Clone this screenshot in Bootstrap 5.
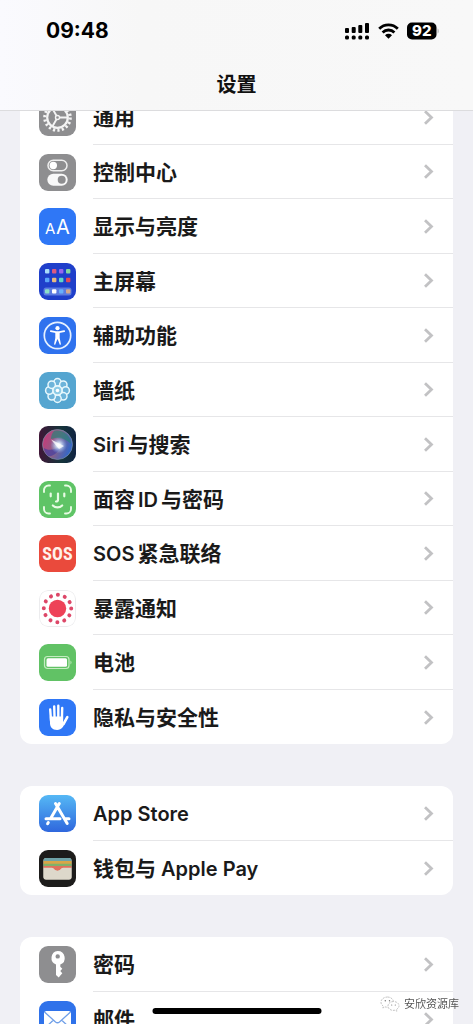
<!DOCTYPE html>
<html lang="zh-CN">
<head>
<meta charset="utf-8">
<meta name="viewport" content="width=device-width, initial-scale=1">
<title>设置</title>
<link href="https://cdn.jsdelivr.net/npm/bootstrap@5.3.0/dist/css/bootstrap.min.css" rel="stylesheet">
<style>
  body {
    font-family: Inter, "Noto Sans CJK SC", sans-serif;
    background: #f0f0f5;
    color: #111;
  }
  .top-bar {
    height: 111px;
    background: linear-gradient(90deg, #fafafe, #f7f7f7 30%, #f8f8f8);
    border-bottom: 1px solid #dcdcde;
  }
  .status-row { padding: 18px 34px 0 46px; }
  .clock { font-size: 21px; line-height: 26px; font-weight: 700; color: #000; }
  .page-title { font-size: 20px; line-height: 28px; font-weight: 600; margin-top: 27px; }
  .settings { margin-top: -21px; padding: 0 20px; }
  .group { margin-bottom: 42px; border-radius: 12px; overflow: hidden; background: #fff; }
  .setting {
    height: 54px;
    padding-left: 19px;
    color: #1a1a1a;
    font-size: 21px;
    line-height: 28px;
    font-weight: 600;
    text-decoration: none;
  }
  .setting:nth-child(odd) { height: 55px; }
  .app-icon { width: 37px; height: 37px; border-radius: 9px; flex: none; margin-right: 17px; }
  .label-row { border-bottom: 1px solid #e6e6e8; padding-right: 19px; }
  .label-row > span { padding-top: 2px; }
  .setting:last-child .label-row { border-bottom: 0; }
  .latin { font-size: 20px; }
  .latin-first { margin-right: 3px; }
  .latin-mid { margin: 0 3px; }
  .chev { width: 11px; height: 17px; flex: none; }
  .home-bar { bottom: 10px; width: 169px; height: 6px; border-radius: 3px; background: #000; }
  .credit { right: 14px; bottom: 12px; font-size: 11px; line-height: 16px; color: #555; text-shadow: 0 0 1px #fff; }
</style>
</head>
<body class="vh-100 overflow-hidden d-flex flex-column">
<svg class="d-none" aria-hidden="true">
  <symbol id="chev" viewBox="0 0 11 17"><path d="M2 2.200 8.500 8.500 2 14.800" fill="none" stroke="#c2c2c4" stroke-width="2.800"/></symbol>
</svg>

<header class="top-bar flex-shrink-0 position-relative z-1">
  <div class="status-row d-flex justify-content-between align-items-center">
    <span class="clock">09:48</span>
    <span class="d-flex align-items-center">
      <svg width="25" height="18" viewBox="0 0 25 18" aria-label="信号"><g><rect x="0" y="6" width="4" height="5" rx="1"/><rect x="6.700" y="5" width="4" height="6" rx="1"/><rect x="13.300" y="3" width="4" height="8" rx="1"/><rect x="20" y="1" width="4" height="10" rx="1"/><rect x="0" y="13.500" width="4" height="4" rx="1.500"/><rect x="6.700" y="13.500" width="4" height="4" rx="1.500"/><rect x="13.300" y="13.500" width="4" height="4" rx="1.500"/><rect x="20" y="13.500" width="4" height="4" rx="1.500"/></g></svg>
      <svg class="ms-2" width="21" height="16" viewBox="0 0 21 16" aria-label="无线网络"><g fill="none" stroke="#000" stroke-width="2.800"><path d="M1.200 5.700a13.200 13.200 0 0 1 18.600 0"/><path d="M4.600 9.400a8.400 8.400 0 0 1 11.800 0"/></g><path d="M10.500 15.800 7 12.300a5 5 0 0 1 7 0z"/></svg>
      <svg class="ms-2" width="32" height="18" viewBox="0 0 32 18" aria-label="电量 92"><rect x="0" y="0.500" width="29.500" height="17" rx="5"/><path d="M30.500 6.500c1.800.6 1.800 4.400 0 5z" fill="#bbb"/><text x="14.800" y="14.200" text-anchor="middle" font-size="15" font-weight="800" fill="#fff">92</text></svg>
    </span>
  </div>
  <h1 class="page-title text-center mb-0">设置</h1>
</header>

<main class="settings">
  <nav class="group" aria-label="通用设置">
    <a class="setting d-flex align-items-center" href="#general">
      <svg class="app-icon" viewBox="0 0 37 37"><rect width="37" height="37" fill="#8e8e90"/><g fill="none" stroke="#f4f4f4"><circle cx="18.500" cy="18.500" r="12.700" stroke-width="3.200" stroke-dasharray="2.200 2.233"/><circle cx="18.500" cy="18.500" r="10.300" stroke-width="2.200"/><circle cx="18.500" cy="18.500" r="2" stroke-width="1.400"/><path d="M20.500 18.500h8M17.500 16.800l-4-7M17.500 20.200l-4 7" stroke-width="1.900"/></g></svg>
      <span class="label-row d-flex flex-grow-1 h-100 align-items-center justify-content-between"><span>通用</span><svg class="chev"><use href="#chev"/></svg></span></a>
    <a class="setting d-flex align-items-center" href="#control">
      <svg class="app-icon" viewBox="0 0 37 37"><rect width="37" height="37" fill="#8e8e90"/><rect x="9" y="6.200" width="19" height="10.600" rx="5.300" fill="none" stroke="#eee" stroke-width="1.500"/><circle cx="14.300" cy="11.500" r="3.700" fill="#fff"/><rect x="8.300" y="19.800" width="20.400" height="12" rx="6" fill="#f8f8f8"/><circle cx="22.700" cy="25.800" r="4" fill="#8e8e90"/></svg>
      <span class="label-row d-flex flex-grow-1 h-100 align-items-center justify-content-between"><span>控制中心</span><svg class="chev"><use href="#chev"/></svg></span></a>
    <a class="setting d-flex align-items-center" href="#display">
      <svg class="app-icon" viewBox="0 0 37 37"><rect width="37" height="37" fill="#2f77f6"/><g font-weight="400" fill="#fff"><text x="6" y="26" font-size="15">A</text><text x="17" y="26" font-size="20">A</text></g></svg>
      <span class="label-row d-flex flex-grow-1 h-100 align-items-center justify-content-between"><span>显示与亮度</span><svg class="chev"><use href="#chev"/></svg></span></a>
    <a class="setting d-flex align-items-center" href="#home">
      <svg class="app-icon" viewBox="0 0 37 37"><rect width="37" height="37" fill="#1f3fca"/><rect x="4.500" y="24.500" width="28" height="8" rx="2.500" fill="#5b7be0"/><g><rect x="6" y="6" width="4.400" height="4.400" rx="1" fill="#a9dcf8"/><rect x="13" y="6" width="4.400" height="4.400" rx="1" fill="#dc5a80"/><rect x="20" y="6" width="4.400" height="4.400" rx="1" fill="#9966ec"/><rect x="27" y="6" width="4.400" height="4.400" rx="1" fill="#84d6a0"/><rect x="6" y="14.800" width="4.400" height="4.400" rx="1" fill="#5aa4f8"/><rect x="13" y="14.800" width="4.400" height="4.400" rx="1" fill="#e8ba80"/><rect x="20" y="14.800" width="4.400" height="4.400" rx="1" fill="#62d6c4"/><rect x="27" y="14.800" width="4.400" height="4.400" rx="1" fill="#e24858"/><rect x="6" y="26.200" width="4.400" height="4.400" rx="1" fill="#8ce0c8"/><rect x="13" y="26.200" width="4.400" height="4.400" rx="1" fill="#fff"/><rect x="20" y="26.200" width="4.400" height="4.400" rx="1" fill="#69b0fa"/><rect x="27" y="26.200" width="4.400" height="4.400" rx="1" fill="#d4a88c"/></g></svg>
      <span class="label-row d-flex flex-grow-1 h-100 align-items-center justify-content-between"><span>主屏幕</span><svg class="chev"><use href="#chev"/></svg></span></a>
    <a class="setting d-flex align-items-center" href="#access">
      <svg class="app-icon" viewBox="0 0 37 37"><rect width="37" height="37" fill="#2f72ee"/><circle cx="18.500" cy="18.500" r="13.200" fill="none" stroke="#e4f0ff" stroke-width="1.700"/><circle cx="18.500" cy="11.200" r="2.100" fill="#fff"/><path d="M11.800 14.200l5 1h3.400l5-1M18.500 15.500v6" stroke="#fff" stroke-width="1.700" stroke-linecap="round" fill="none"/><path d="M16.300 15h4.400v6l1.300 6.500-1.200.3-2.300-6-2.300 6-1.200-.3 1.300-6.500z" fill="#fff"/></svg>
      <span class="label-row d-flex flex-grow-1 h-100 align-items-center justify-content-between"><span>辅助功能</span><svg class="chev"><use href="#chev"/></svg></span></a>
    <a class="setting d-flex align-items-center" href="#wallpaper">
      <svg class="app-icon" viewBox="0 0 37 37"><rect width="37" height="37" fill="#55a5d0"/><g fill="#6db4da" stroke="#e6f7fc" stroke-width="1.500"><circle cx="18.500" cy="10.300" r="3.700"/><circle cx="24.300" cy="12.700" r="3.700"/><circle cx="26.700" cy="18.500" r="3.700"/><circle cx="24.300" cy="24.300" r="3.700"/><circle cx="18.500" cy="26.700" r="3.700"/><circle cx="12.700" cy="24.300" r="3.700"/><circle cx="10.300" cy="18.500" r="3.700"/><circle cx="12.700" cy="12.700" r="3.700"/><circle cx="18.500" cy="18.500" r="4.500" fill="#8ccbe6"/></g><circle cx="18.500" cy="18.500" r="1.800" fill="#fff"/></svg>
      <span class="label-row d-flex flex-grow-1 h-100 align-items-center justify-content-between"><span>墙纸</span><svg class="chev"><use href="#chev"/></svg></span></a>
    <a class="setting d-flex align-items-center" href="#siri">
      <svg class="app-icon" viewBox="0 0 37 37"><defs><linearGradient id="orb" x1="0" y1="0.300" x2="1" y2="0.700"><stop offset="0" stop-color="#c83a78"/><stop offset=".45" stop-color="#8b6088"/><stop offset="1" stop-color="#2668d0"/></linearGradient><radialGradient id="glow" cx=".54" cy=".52" r=".28"><stop offset="0" stop-color="#fff"/><stop offset=".25" stop-color="#e4f4ff" stop-opacity=".9"/><stop offset="1" stop-color="#80b8ff" stop-opacity="0"/></radialGradient><linearGradient id="night" x1="0" x2="1"><stop offset="0" stop-color="#401637"/><stop offset=".6" stop-color="#15343a"/><stop offset="1" stop-color="#102443"/></linearGradient></defs><rect width="37" height="37" fill="url(#night)"/><circle cx="18.500" cy="18.500" r="15" fill="url(#orb)" stroke="#7790a8" stroke-opacity=".7"/><path d="M15 5c8-2 17 4 17 13-6-6-13-7-20-5 0-3 1-6 3-8z" fill="#258276" opacity=".65"/><path d="M5 22c4 3 11 2 17-2-2 6-8 11-13 10-2-2-4-5-4-8z" fill="#443fa0" opacity=".7"/><circle cx="18.500" cy="18.500" r="15" fill="url(#glow)"/><path d="M12 13.500 25 20l-5 3z" fill="#fff" opacity=".75"/></svg>
      <span class="label-row d-flex flex-grow-1 h-100 align-items-center justify-content-between"><span><span class="latin latin-first">Siri</span>与搜索</span><svg class="chev"><use href="#chev"/></svg></span></a>
    <a class="setting d-flex align-items-center" href="#faceid">
      <svg class="app-icon" viewBox="0 0 37 37"><rect width="37" height="37" fill="#5fc466"/><g fill="none" stroke="#e8fbe4" stroke-width="1.900" stroke-linecap="round"><path d="M5 11V9a4.500 4.500 0 0 1 4.500-4.500H11M26 4.500h1.500A4.500 4.500 0 0 1 32 9v2M32 26v2a4.500 4.500 0 0 1-4.500 4.500H26M11 32.500H9.500A4.500 4.500 0 0 1 5 28v-2"/><path d="M11.700 12.500v2.800M25.300 12.500v2.800M19 12.500v6.300q0 1.700-2 1.700M13.800 24.500c2.600 2.600 6.800 2.600 9.400 0" stroke-width="2.200"/></g></svg>
      <span class="label-row d-flex flex-grow-1 h-100 align-items-center justify-content-between"><span>面容<span class="latin latin-mid">ID</span>与密码</span><svg class="chev"><use href="#chev"/></svg></span></a>
    <a class="setting d-flex align-items-center" href="#sos">
      <svg class="app-icon" viewBox="0 0 37 37"><rect width="37" height="37" fill="#ea4a3c"/><text x="18.500" y="24.500" text-anchor="middle" font-family="'Liberation Sans Narrow','Roboto Condensed','Open Sans Condensed',Roboto,sans-serif" font-size="18" font-weight="700" fill="#fff0ea">SOS</text></svg>
      <span class="label-row d-flex flex-grow-1 h-100 align-items-center justify-content-between"><span><span class="latin latin-first">SOS</span>紧急联络</span><svg class="chev"><use href="#chev"/></svg></span></a>
    <a class="setting d-flex align-items-center" href="#exposure">
      <svg class="app-icon" viewBox="0 0 37 37"><rect x=".5" y=".5" width="36" height="36" rx="8.500" fill="#fff" stroke="#ececee"/><circle cx="18.500" cy="18.500" r="8.700" fill="#ee4258"/><circle cx="18.500" cy="18.500" r="13.700" fill="none" stroke="#dd4768" stroke-width="4" stroke-linecap="round" stroke-dasharray="0.010 7.163"/></svg>
      <span class="label-row d-flex flex-grow-1 h-100 align-items-center justify-content-between"><span>暴露通知</span><svg class="chev"><use href="#chev"/></svg></span></a>
    <a class="setting d-flex align-items-center" href="#battery">
      <svg class="app-icon" viewBox="0 0 37 37"><rect width="37" height="37" fill="#61c265"/><rect x="5.500" y="12.500" width="24.500" height="12" rx="3" fill="none" stroke="#c4ecc0" stroke-width="1.200"/><rect x="7.500" y="14.300" width="20.500" height="8.400" rx="1.500" fill="#fff"/><path d="M31.500 16.500q2 2 0 4z" fill="#c4ecc0"/></svg>
      <span class="label-row d-flex flex-grow-1 h-100 align-items-center justify-content-between"><span>电池</span><svg class="chev"><use href="#chev"/></svg></span></a>
    <a class="setting d-flex align-items-center" href="#privacy">
      <svg class="app-icon" viewBox="0 0 37 37"><rect width="37" height="37" fill="#2f77f6"/><g stroke="#fff" stroke-linecap="round" fill="none"><path d="M11.200 10.500l.8 11M15.200 7.500l.4 13M19.300 6.800v13M23.200 9l-.3 12" stroke-width="2.400"/><path d="M28.300 18.200 24.500 25" stroke-width="2.600"/></g><path d="M10.800 17.500h13.300v6l2-1c-1 4.500-3.300 8.500-8 8.500-5 0-6.900-3-7.100-6.500z" fill="#fff"/></svg>
      <span class="label-row d-flex flex-grow-1 h-100 align-items-center justify-content-between"><span>隐私与安全性</span><svg class="chev"><use href="#chev"/></svg></span></a>
  </nav>

  <nav class="group" aria-label="商店与钱包">
    <a class="setting d-flex align-items-center" href="#store">
      <svg class="app-icon" viewBox="0 0 37 37"><defs><linearGradient id="sky" x1="0" y1="0" x2="0" y2="1"><stop offset="0" stop-color="#55b8f5"/><stop offset="1" stop-color="#2f67dd"/></linearGradient></defs><rect width="37" height="37" fill="url(#sky)"/><g stroke="#fff" stroke-width="3" stroke-linecap="round" fill="none"><path d="M20.300 8.500 11.500 23.800M16.500 8.500l11.700 20M7 23.800h14M26 23.800h4M9.300 27.500l-.7 1.200"/></g></svg>
      <span class="label-row d-flex flex-grow-1 h-100 align-items-center justify-content-between"><span class="latin">App Store</span><svg class="chev"><use href="#chev"/></svg></span></a>
    <a class="setting d-flex align-items-center" href="#wallet">
      <svg class="app-icon" viewBox="0 0 37 37"><rect width="37" height="37" fill="#1d1c1b"/><rect x="4.500" y="8" width="28" height="21.500" rx="2.500" fill="#ddd8cb"/><path d="M4.500 10.500A2.500 2.500 0 0 1 7 8h23a2.500 2.500 0 0 1 2.500 2.500v1h-28z" fill="#6fa3a8"/><path d="M4.500 11h28v3.200h-28z" fill="#d9a648"/><path d="M4.500 13.800h28v2.600h-28z" fill="#7fb26a"/><path d="M4.500 16h28v2h-9c-1.500 0-2 3-5 3s-3.500-3-5-3h-9z" fill="#e0705c"/><path d="M4.500 17.700h8.500c1.800 0 2 3 5.500 3s3.700-3 5.500-3h8.500V27a2.500 2.500 0 0 1-2.500 2.500H7A2.500 2.500 0 0 1 4.500 27z" fill="#ddd8cb"/></svg>
      <span class="label-row d-flex flex-grow-1 h-100 align-items-center justify-content-between"><span>钱包与<span class="latin"> Apple Pay</span></span><svg class="chev"><use href="#chev"/></svg></span></a>
  </nav>

  <nav class="group" aria-label="账户">
    <a class="setting d-flex align-items-center" href="#passwords">
      <svg class="app-icon" viewBox="0 0 37 37"><rect width="37" height="37" fill="#8e8e90"/><path fill-rule="evenodd" fill="#fff" d="M18.700 5a7 7 0 0 1 2.600 13.500v2.300l2 2-2 2.200 2 2.200-3.600 4.300-2.700-2.500V18.500A7 7 0 0 1 18.700 5zm0 3.200a2.200 2.200 0 1 0 0 4.400 2.200 2.200 0 0 0 0-4.400z"/></svg>
      <span class="label-row d-flex flex-grow-1 h-100 align-items-center justify-content-between"><span>密码</span><svg class="chev"><use href="#chev"/></svg></span></a>
    <a class="setting d-flex align-items-center" href="#mail">
      <svg class="app-icon" viewBox="0 0 37 37"><rect width="37" height="37" fill="#2f72ea"/><rect x="5" y="10" width="27" height="18" rx="2.500" fill="#fff"/><path d="M5.500 11l11 10q2 1.500 4 0l11-10M6 27l8.500-8M31 27l-8.500-8" fill="none" stroke="#6f9fe8" stroke-width="1.300"/></svg>
      <span class="label-row d-flex flex-grow-1 h-100 align-items-center justify-content-between"><span>邮件</span><svg class="chev"><use href="#chev"/></svg></span></a>
  </nav>
</main>

<div class="home-bar position-fixed start-50 translate-middle-x"></div>
<div class="credit position-fixed d-flex align-items-center gap-1">
  <svg width="20" height="16" viewBox="0 0 20 16"><g fill="#fff" stroke="#b4b4b4" stroke-width=".8" stroke-dasharray="2 1"><path d="M7.500 1C3.900 1 1 3.300 1 6.200c0 1.700.9 3 2.300 4L2.800 12l2.200-1.100c3.500 1 8.500-.5 8.500-4.700C13.500 3.300 11 1 7.500 1z"/><path d="M13.500 5.500c-3.200 0-5.500 2-5.500 4.500 0 3.200 3.500 5 7 4.200l2 1-.5-1.700c1.500-1 2.500-2.200 2.500-3.700 0-2.400-2.400-4.300-5.500-4.300z"/></g><g fill="#777"><circle cx="5.300" cy="4.700" r=".7"/><circle cx="9.500" cy="4.700" r=".7"/><circle cx="11.700" cy="9" r=".6"/><circle cx="15.300" cy="9" r=".6"/></g></svg>
  <span>安欣资源库</span>
</div>
<script src="https://cdn.jsdelivr.net/npm/bootstrap@5.3.0/dist/js/bootstrap.bundle.min.js"></script>
</body>
</html>
